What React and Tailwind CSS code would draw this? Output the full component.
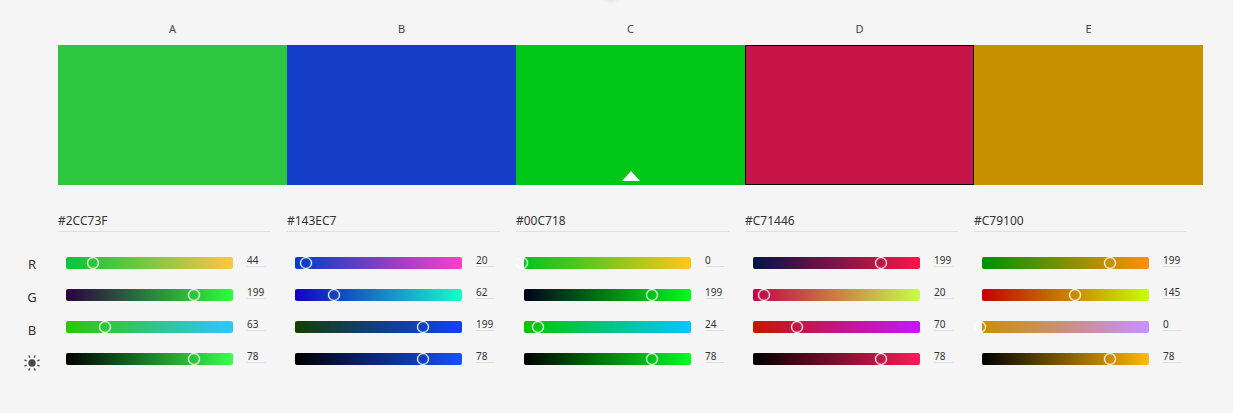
import { useState } from "react";

const INITIAL = [
  { name: "A", rgb: [44, 199, 63] },
  { name: "B", rgb: [20, 62, 199] },
  { name: "C", rgb: [0, 199, 24] },
  { name: "D", rgb: [199, 20, 70] },
  { name: "E", rgb: [199, 145, 0] },
];

const BASE_INDEX = 2;
const CHANNELS = ["Red", "Green", "Blue"];
const RAY_ANGLES = [22.5, 67.5, 112.5, 157.5, 202.5, 247.5, 292.5, 337.5];

const css = (rgb) => `rgb(${rgb.join(",")})`;
const toHex = (rgb) =>
  "#" + rgb.map((v) => v.toString(16).padStart(2, "0")).join("").toUpperCase();
const withChannel = (rgb, i, v) => rgb.map((old, j) => (j === i ? v : old));
const brightness = (rgb) => Math.round((Math.max(...rgb) / 255) * 100);

function withBrightness(rgb, percent) {
  const max = Math.max(...rgb) || 1;
  return rgb.map((v) => Math.round((v / max) * 255 * (percent / 100)));
}

function Slider({ label, value, max, from, to, onChange }) {
  const change = (e) => {
    const next = Number(e.target.value);
    if (Number.isFinite(next)) onChange(Math.min(max, Math.max(0, Math.round(next))));
  };
  return (
    <div className="flex h-8 items-center pr-[21px]">
      <div className="grid min-w-0 flex-1 items-center">
        <div
          className="col-start-1 row-start-1 mr-1 ml-2 h-3 rounded-[2px]"
          style={{ backgroundImage: `linear-gradient(to right, ${css(from)}, ${css(to)})` }}
        />
        <input
          type="range"
          aria-label={label}
          min="0"
          max={max}
          value={value}
          onChange={change}
          className="col-start-1 row-start-1 h-3 w-full min-w-0 cursor-pointer appearance-none bg-transparent [&::-moz-range-thumb]:h-3 [&::-moz-range-thumb]:w-3 [&::-moz-range-thumb]:rounded-full [&::-moz-range-thumb]:border [&::-moz-range-thumb]:border-white [&::-moz-range-thumb]:bg-transparent [&::-webkit-slider-thumb]:h-3 [&::-webkit-slider-thumb]:w-3 [&::-webkit-slider-thumb]:appearance-none [&::-webkit-slider-thumb]:rounded-full [&::-webkit-slider-thumb]:border [&::-webkit-slider-thumb]:border-white [&::-webkit-slider-thumb]:bg-transparent [&::-webkit-slider-thumb]:shadow-[0_0_1px_#fff,inset_0_0_1px_#fff]"
        />
      </div>
      <input
        type="text"
        inputMode="numeric"
        aria-label={`${label} value`}
        value={value}
        onChange={change}
        className="mt-1.5 ml-2.5 h-3.5 w-[19px] self-start border-b border-[#e0e0e0] bg-transparent p-0 pt-px text-[10px] leading-3 text-[#333]"
      />
    </div>
  );
}

function HexField({ name, rgb, onChange }) {
  const [draft, setDraft] = useState(null);
  const change = (e) => {
    const text = e.target.value;
    setDraft(text);
    if (/^#[0-9a-f]{6}$/i.test(text)) {
      onChange([1, 3, 5].map((i) => parseInt(text.slice(i, i + 2), 16)));
    }
  };
  return (
    <input
      type="text"
      aria-label={`Color ${name} hex`}
      value={draft ?? toHex(rgb)}
      onChange={change}
      onBlur={() => setDraft(null)}
      className="block h-6 w-full border-b border-[#e0e0e0] bg-transparent p-0 pt-0.5 text-[12px] leading-5 text-[#333]"
    />
  );
}

function SunIcon() {
  return (
    <svg viewBox="-9 -9 18 18" className="h-[18px] w-[18px]" role="img" aria-label="Brightness">
      <circle r="3.7" fill="#4a4a4a" />
      {RAY_ANGLES.map((a) => (
        <line
          key={a}
          x1="5.8"
          x2="8.2"
          stroke="#4a4a4a"
          strokeWidth="1.4"
          transform={`rotate(${a})`}
        />
      ))}
    </svg>
  );
}

export default function App() {
  const [colors, setColors] = useState(INITIAL);
  const [selected, setSelected] = useState(3);
  const update = (index, rgb) =>
    setColors((list) => list.map((c, i) => (i === index ? { ...c, rgb } : c)));

  return (
    <main className="relative min-h-screen overflow-hidden bg-[#f5f5f5] font-['Noto_Sans',sans-serif] text-[#444]">
      <div className="absolute -top-5 left-1/2 -ml-4 h-5 w-5 rounded-full shadow-[0_1px_4px_rgba(0,0,0,0.1)]" />

      <div className="mr-[30px] ml-[58px] grid grid-cols-5 pt-[21px]">
        {colors.map((c, i) => (
          <div key={c.name}>
            <div className="pb-2 text-center text-[11px] leading-4">{c.name}</div>
            <button
              type="button"
              aria-label={`Select color ${c.name}`}
              aria-pressed={selected === i}
              onClick={() => setSelected(i)}
              className={`flex h-[140px] w-full cursor-pointer items-end justify-center pb-1 ${
                selected === i ? "border border-black" : ""
              }`}
              style={{ backgroundColor: css(c.rgb) }}
            >
              {i === BASE_INDEX && (
                <svg viewBox="0 0 18 10" className="h-2.5 w-[18px]" aria-hidden="true">
                  <path d="M9 0 18 10H0Z" fill="#fff" />
                </svg>
              )}
            </button>
          </div>
        ))}
      </div>

      <div className="mr-[30px] flex pt-[23px]">
        <div className="flex w-[58px] shrink-0 flex-col pt-[39px] pl-1.5 text-center text-[13px] text-[#333]">
          <span className="leading-[34px]">R</span>
          <span className="leading-[33px]">G</span>
          <span className="leading-[33px]">B</span>
          <span className="flex h-8 items-center justify-center">
            <SunIcon />
          </span>
        </div>
        <div className="grid min-w-0 flex-1 grid-cols-5">
          {colors.map((c, i) => (
            <section key={c.name} aria-label={`Color ${c.name}`} className="min-w-0">
              <div className="pr-4 pb-[15px]">
                <HexField name={c.name} rgb={c.rgb} onChange={(rgb) => update(i, rgb)} />
              </div>
              {CHANNELS.map((channel, k) => (
                <Slider
                  key={channel}
                  label={`${channel} of ${c.name}`}
                  value={c.rgb[k]}
                  max={255}
                  from={withChannel(c.rgb, k, 0)}
                  to={withChannel(c.rgb, k, 255)}
                  onChange={(v) => update(i, withChannel(c.rgb, k, v))}
                />
              ))}
              <Slider
                label={`Brightness of ${c.name}`}
                value={brightness(c.rgb)}
                max={100}
                from={[0, 0, 0]}
                to={withBrightness(c.rgb, 100)}
                onChange={(v) => update(i, withBrightness(c.rgb, v))}
              />
            </section>
          ))}
        </div>
      </div>
    </main>
  );
}
